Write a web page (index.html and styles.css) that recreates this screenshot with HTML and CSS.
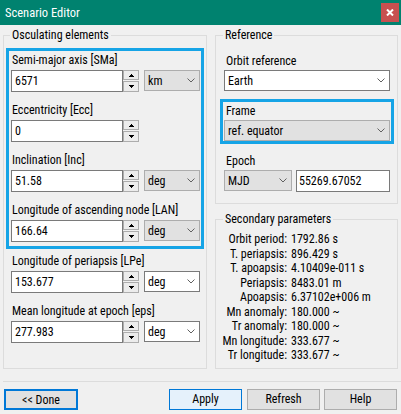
FILE: index.html
```html
<!DOCTYPE html>
<html>
<head>
<meta charset="utf-8">
<title>Scenario Editor</title>
<link rel="stylesheet" href="styles.css">
</head>
<body>
<div class="window">
  <div class="titlebar">
    <span class="title">Scenario Editor</span>
    <span class="close"><svg width="8" height="7" viewBox="0 0 8 7"><path d="M1 0.5 L7 6.5 M7 0.5 L1 6.5" stroke="#fff" stroke-width="2"/></svg></span>
  </div>
  <div class="main">
    <fieldset class="group left">
      <legend>Osculating elements</legend>
      <div class="hl hl-left on">
        <div class="field">
          <div class="label">Semi-major axis [SMa]</div>
          <div class="row">
            <div class="input">6571</div>
            <div class="spin"><span class="sb"><svg width="5" height="3" viewBox="0 0 5 3" shape-rendering="crispEdges"><path d="M0 3 L2.5 0 L5 3Z"/></svg></span><span class="sb sb-down"><svg width="5" height="3" viewBox="0 0 5 3" shape-rendering="crispEdges"><path d="M0 0 L5 0 L2.5 3Z"/></svg></span></div>
            <div class="combo unit"><span>km</span><svg class="chev" width="8" height="5" viewBox="0 0 8 5"><polyline points="0.5,0.5 4,4 7.5,0.5" fill="none" stroke="#606060" stroke-width="1"/></svg></div>
          </div>
        </div>
        <div class="field">
          <div class="label">Eccentricity [Ecc]</div>
          <div class="row">
            <div class="input">0</div>
            <div class="spin"><span class="sb"><svg width="5" height="3" viewBox="0 0 5 3" shape-rendering="crispEdges"><path d="M0 3 L2.5 0 L5 3Z"/></svg></span><span class="sb sb-down"><svg width="5" height="3" viewBox="0 0 5 3" shape-rendering="crispEdges"><path d="M0 0 L5 0 L2.5 3Z"/></svg></span></div>
          </div>
        </div>
        <div class="field">
          <div class="label">Inclination [Inc]</div>
          <div class="row">
            <div class="input">51.58</div>
            <div class="spin"><span class="sb"><svg width="5" height="3" viewBox="0 0 5 3" shape-rendering="crispEdges"><path d="M0 3 L2.5 0 L5 3Z"/></svg></span><span class="sb sb-down"><svg width="5" height="3" viewBox="0 0 5 3" shape-rendering="crispEdges"><path d="M0 0 L5 0 L2.5 3Z"/></svg></span></div>
            <div class="combo unit"><span>deg</span><svg class="chev" width="8" height="5" viewBox="0 0 8 5"><polyline points="0.5,0.5 4,4 7.5,0.5" fill="none" stroke="#606060" stroke-width="1"/></svg></div>
          </div>
        </div>
        <div class="field">
          <div class="label">Longitude of ascending node [LAN]</div>
          <div class="row">
            <div class="input">166.64</div>
            <div class="spin"><span class="sb"><svg width="5" height="3" viewBox="0 0 5 3" shape-rendering="crispEdges"><path d="M0 3 L2.5 0 L5 3Z"/></svg></span><span class="sb sb-down"><svg width="5" height="3" viewBox="0 0 5 3" shape-rendering="crispEdges"><path d="M0 0 L5 0 L2.5 3Z"/></svg></span></div>
            <div class="combo unit"><span>deg</span><svg class="chev" width="8" height="5" viewBox="0 0 8 5"><polyline points="0.5,0.5 4,4 7.5,0.5" fill="none" stroke="#606060" stroke-width="1"/></svg></div>
          </div>
        </div>
      </div>
      <div class="hl hl-left">
        <div class="field">
          <div class="label">Longitude of periapsis [LPe]</div>
          <div class="row">
            <div class="input">153.677</div>
            <div class="spin"><span class="sb"><svg width="5" height="3" viewBox="0 0 5 3" shape-rendering="crispEdges"><path d="M0 3 L2.5 0 L5 3Z"/></svg></span><span class="sb sb-down"><svg width="5" height="3" viewBox="0 0 5 3" shape-rendering="crispEdges"><path d="M0 0 L5 0 L2.5 3Z"/></svg></span></div>
            <div class="combo unit white"><span>deg</span><svg class="chev" width="8" height="5" viewBox="0 0 8 5"><polyline points="0.5,0.5 4,4 7.5,0.5" fill="none" stroke="#606060" stroke-width="1"/></svg></div>
          </div>
        </div>
        <div class="field">
          <div class="label">Mean longitude at epoch [eps]</div>
          <div class="row">
            <div class="input">277.983</div>
            <div class="spin"><span class="sb"><svg width="5" height="3" viewBox="0 0 5 3" shape-rendering="crispEdges"><path d="M0 3 L2.5 0 L5 3Z"/></svg></span><span class="sb sb-down"><svg width="5" height="3" viewBox="0 0 5 3" shape-rendering="crispEdges"><path d="M0 0 L5 0 L2.5 3Z"/></svg></span></div>
            <div class="combo unit white"><span>deg</span><svg class="chev" width="8" height="5" viewBox="0 0 8 5"><polyline points="0.5,0.5 4,4 7.5,0.5" fill="none" stroke="#606060" stroke-width="1"/></svg></div>
          </div>
        </div>
      </div>
    </fieldset>

    <div class="rightcol">
      <fieldset class="group ref">
        <legend>Reference</legend>
        <div class="hl hl-right">
          <div class="field">
            <div class="label">Orbit reference</div>
            <div class="combo white full"><span>Earth</span><svg class="chev" width="8" height="5" viewBox="0 0 8 5"><polyline points="0.5,0.5 4,4 7.5,0.5" fill="none" stroke="#606060" stroke-width="1"/></svg></div>
          </div>
        </div>
        <div class="hl hl-right on gap">
          <div class="field">
            <div class="label">Frame</div>
            <div class="combo full"><span>ref. equator</span><svg class="chev" width="8" height="5" viewBox="0 0 8 5"><polyline points="0.5,0.5 4,4 7.5,0.5" fill="none" stroke="#606060" stroke-width="1"/></svg></div>
          </div>
        </div>
        <div class="hl hl-right gap">
          <div class="field">
            <div class="label">Epoch</div>
            <div class="row">
              <div class="combo mjd"><span>MJD</span><svg class="chev" width="8" height="5" viewBox="0 0 8 5"><polyline points="0.5,0.5 4,4 7.5,0.5" fill="none" stroke="#606060" stroke-width="1"/></svg></div>
              <div class="input date">55269.67052</div>
            </div>
          </div>
        </div>
      </fieldset>

      <fieldset class="group sec">
        <legend>Secondary parameters</legend>
        <div class="params">
          <span class="k">Orbit period:</span><span class="v">1792.86 s</span>
          <span class="k">T. periapsis:</span><span class="v">896.429 s</span>
          <span class="k">T. apoapsis:</span><span class="v">4.10409e-011 s</span>
          <span class="k">Periapsis:</span><span class="v">8483.01 m</span>
          <span class="k">Apoapsis:</span><span class="v">6.37102e+006 m</span>
          <span class="k">Mn anomaly:</span><span class="v">180.000 ~</span>
          <span class="k">Tr anomaly:</span><span class="v">180.000 ~</span>
          <span class="k">Mn longitude:</span><span class="v">333.677 ~</span>
          <span class="k">Tr longitude:</span><span class="v">333.677 ~</span>
        </div>
      </fieldset>
    </div>
  </div>
  <div class="sep"></div>
  <div class="buttons">
    <button class="btn done">&lt;&lt; Done</button>
    <button class="btn apply">Apply</button>
    <button class="btn">Refresh</button>
    <button class="btn">Help</button>
  </div>
</div>
</body>
</html>
```
FILE: styles.css
```css
* { box-sizing: border-box; }
html, body { margin: 0; padding: 0; }
body {
  width: 401px;
  height: 414px;
  overflow: hidden;
  background: #f0f0f0;
  font-family: "Roboto Condensed", "Liberation Sans Narrow", "Liberation Sans", sans-serif;
  font-size: 12px;
  color: #000;
}
.titlebar {
  height: 25px;
  background: #00826f;
  display: flex;
  align-items: center;
  justify-content: space-between;
  padding: 0 2px 0 5px;
}
.title { color: #fff; font-size: 12.5px; line-height: 16px; }
.close {
  width: 18px;
  height: 19px;
  background: #c75050;
  display: flex;
  align-items: center;
  justify-content: center;
}
.close svg { display: block; }

.main {
  display: flex;
  gap: 8px;
  padding: 3px 3px 0 3px;
  height: 344px;
}
.group {
  margin: 0;
  min-width: 0;
  border: 1px solid #dcdcdc;
}
.group legend {
  padding: 0 2px;
  line-height: 14px;
}
.left {
  width: 204px;
  padding: 6px 2px 0 2px;
}
.left legend { margin-left: 4px; }
.rightcol {
  width: 183px;
  display: flex;
  flex-direction: column;
  gap: 8px;
}
.ref { padding: 7px 3px 8px 4px; }
.ref legend { margin-left: 3px; }
.sec { flex: 1; padding: 6px 3px 0 4px; }
.sec legend { margin-left: 3px; }

.hl { border: 3px solid transparent; }
.hl.on { border-color: #16a4e6; }
.hl-left { padding: 0 1px 4px 2px; }
.hl-right { padding: 0 1px 0 1px; }
.hl.gap { margin-top: 5px; }

.field { padding-top: 1px; display: flex; flex-direction: column; }
.field + .field { margin-top: 9px; }
.label { line-height: 16px; margin-bottom: 2px; padding-left: 1px; white-space: nowrap; }
.hl-right .label { margin-bottom: 1px; padding-left: 2px; }

.row { display: flex; align-items: flex-start; height: 22px; }
.input {
  width: 112px;
  height: 22px;
  border: 1px solid #7a7a7a;
  background: #fff;
  padding: 0 3px;
  line-height: 20px;
  white-space: nowrap;
}
.input.date { width: 94px; margin-left: 4px; padding: 0 2px; }
.spin {
  width: 16px;
  height: 22px;
  display: flex;
  flex-direction: column;
  gap: 1px;
}
.sb {
  height: 10px;
  border: 1px solid #adadad;
  background: #ececec;
  display: flex;
  align-items: center;
  justify-content: center;
}
.sb-down { height: 11px; }
.sb svg { display: block; }
.combo {
  height: 21px;
  border: 1px solid #adadad;
  background: #e1e1e1;
  display: flex;
  align-items: center;
  justify-content: space-between;
  padding: 0 4px 0 3px;
  white-space: nowrap;
}
.combo.white { background: #fff; border-color: #7a7a7a; }
.combo.unit { width: 56px; margin-left: 5px; }
.combo.full { width: 100%; }
.combo.mjd { width: 68px; }
.chev { display: block; flex: none; }

.params {
  display: grid;
  grid-template-columns: 67px auto;
  column-gap: 4px;
  line-height: 14.5px;
}
.params .k { text-align: right; white-space: nowrap; }
.params .v { white-space: nowrap; }

.sep {
  margin: 12px 0 0 3px;
  height: 1px;
  background: #dcdcdc;
}
.buttons {
  display: flex;
  gap: 4px;
  padding: 0 4px 0 4px;
  margin-top: 7px;
}
.btn {
  width: 73px;
  height: 21px;
  border: 1px solid #adadad;
  background: #e1e1e1;
  font: inherit;
  color: #000;
  padding: 0;
  margin: 0;
  line-height: 19px;
}
.btn.done { width: 74px; border: 2px solid #0078d7; }
.btn.apply { margin-left: auto; margin-right: 1px; background: #e5f1fb; border-color: #0078d7; }
```
